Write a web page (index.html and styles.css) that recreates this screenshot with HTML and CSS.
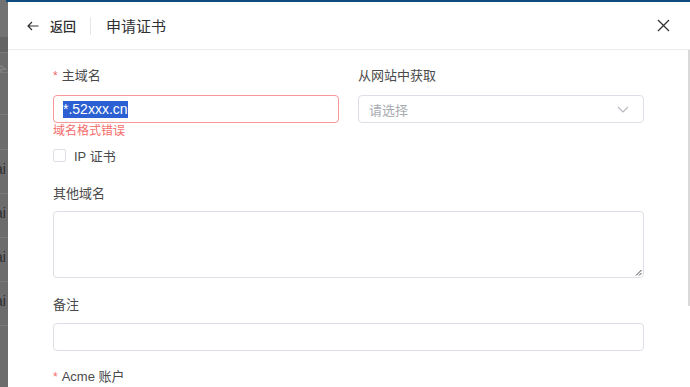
FILE: index.html
```html
<!DOCTYPE html>
<html lang="zh">
<head>
<meta charset="utf-8">
<link rel="stylesheet" href="styles.css">
</head>
<body>
<div class="page">
  <div class="backdrop">
    <div class="bd-row bd-r1"></div>
    <div class="bd-row bd-r2"></div>
    <div class="bd-row bd-r3"><span class="bd-txt">余</span></div>
    <div class="bd-row bd-r4"></div>
    <div class="bd-row bd-r5"></div>
    <div class="bd-row bd-r6"><span class="bd-txt">ai</span></div>
    <div class="bd-row bd-r6"><span class="bd-txt">ai</span></div>
    <div class="bd-row bd-r6"><span class="bd-txt">ai</span></div>
    <div class="bd-row bd-r6"><span class="bd-txt">ai</span></div>
  </div>
  <div class="drawer">
    <div class="header">
      <div class="back">
        <svg class="back-icon" width="12" height="10" viewBox="0 0 12 10"><path d="M11.5 5H1M5 1L1 5l4 4" fill="none" stroke="#333" stroke-width="1.2"/></svg>
        <span class="back-text">返回</span>
      </div>
      <div class="divider"></div>
      <div class="title">申请证书</div>
      <svg class="close" width="13" height="13" viewBox="0 0 13 13"><path d="M1 1l11 11M12 1L1 12" fill="none" stroke="#333" stroke-width="1.3"/></svg>
    </div>
    <div class="content">
      <div class="row2">
        <div class="col">
          <div class="label"><span class="req">*</span>主域名</div>
          <div class="input error"><span class="sel">*.52xxx.cn</span></div>
          <div class="err">域名格式错误</div>
          <label class="check"><span class="box"></span><span class="check-text">IP 证书</span></label>
        </div>
        <div class="col">
          <div class="label">从网站中获取</div>
          <div class="input select"><span class="ph">请选择</span>
            <svg class="chev" width="12" height="7" viewBox="0 0 12 7"><path d="M1 1l5 5 5-5" fill="none" stroke="#b4b7bd" stroke-width="1.1"/></svg>
          </div>
        </div>
      </div>
      <div class="label l-other">其他域名</div>
      <div class="textarea">
        <svg class="grip" width="7" height="7" viewBox="0 0 7 7"><path d="M6.5 1L1 6.5M6.5 4L4 6.5" stroke="#444" stroke-width="1"/></svg>
      </div>
      <div class="label l-note">备注</div>
      <div class="input"></div>
      <div class="label l-acme"><span class="req">*</span>Acme 账户</div>
    </div>
    <div class="scrollbar"></div>
  </div>
</div>
</body>
</html>
```

FILE: styles.css
```css
* { box-sizing: border-box; }
html, body { margin: 0; padding: 0; }
body {
  width: 690px;
  height: 387px;
  overflow: hidden;
  font-family: "Liberation Sans", "Noto Sans CJK SC", sans-serif;
  color: #333;
  background: #6e6e6e;
}
.page {
  display: grid;
  grid-template-columns: 8px 682px;
  height: 387px;
  background: #6e6e6e;
}
.backdrop {
  width: 8px;
  background-color: #6c6c6c;
  overflow: hidden;
  display: flex;
  flex-direction: column;
}
.bd-row {
  border-bottom: 1px solid #7a7a7a;
  overflow: hidden;
  flex: none;
  background-color: #6c6c6c;
}
.bd-r1 { height: 37px; background-color: #727272; border-bottom: none; }
.bd-r2 { height: 16px; background-color: #636363; }
.bd-r3 { height: 20px; }
.bd-r4 { height: 42px; }
.bd-r5 { height: 35px; }
.bd-r6 { height: 44px; }
.bd-r3 .bd-txt { font-size: 12px; color: #8a8a8a; }
.bd-txt {
  display: block;
  margin-left: -5px;
  margin-top: 11px;
  font-size: 14px;
  line-height: 16px;
  color: #2e2e2e;
  white-space: nowrap;
}
.drawer {
  position: relative;
  border-top: 2px solid #0d4a7d;
  background: #fff;
}
.drawer::before {
  content: "";
  position: absolute;
  left: -2px;
  top: -2px;
  width: 2px;
  height: 2px;
  background: #0d4a7d;
}
.header {
  height: 48px;
  border-bottom: 1px solid #ededed;
  display: flex;
  align-items: center;
  padding-left: 19px;
  padding-right: 20px;
}
.back {
  display: flex;
  align-items: center;
}
.back-icon { margin-right: 11px; }
.back-text {
  font-family: "Noto Sans CJK SC", sans-serif;
  font-size: 13px;
  font-weight: 500;
  color: #303133;
}
.divider {
  width: 1px;
  height: 18px;
  background: #e6e6e6;
  margin-left: 14px;
  margin-right: 15px;
}
.title {
  font-family: "Noto Sans CJK SC", sans-serif;
  font-size: 15px;
  color: #303133;
  flex: 1;
}
.content {
  padding: 16px 46px 0 45px;
}
.row2 {
  display: grid;
  grid-template-columns: 286px 286px;
  column-gap: 19px;
}
.label {
  height: 20px;
  line-height: 20px;
  font-size: 13px;
  color: #4a4a4a;
  margin-bottom: 9px;
}
.req {
  color: #f56c6c;
  margin-right: 4px;
  font-size: 12px;
}
.input {
  height: 28px;
  border: 1px solid #dcdfe6;
  border-radius: 4px;
  display: flex;
  align-items: center;
  padding: 0 9px;
  position: relative;
  background: #fff;
}
.input.error { border-color: #f89898; }
.sel {
  font-family: "Liberation Sans", Arial, sans-serif;
  font-size: 14px;
  line-height: 17px;
  background: #2c5fd2;
  color: #fff;
}
.err {
  font-size: 12px;
  line-height: 14px;
  color: #f56c6c;
  margin-top: 1px;
}
.check {
  display: flex;
  align-items: center;
  height: 20px;
  margin-top: 7px;
}
.box {
  width: 13px;
  height: 13px;
  border: 1px solid #dcdfe6;
  border-radius: 2px;
  margin-right: 8px;
}
.check-text {
  font-size: 13px;
  color: #4a4a4a;
}
.select { justify-content: space-between; padding: 0 14px 0 10px; }
.ph {
  font-size: 13px;
  color: #a8abb2;
}
.l-other { margin-top: 19px; margin-bottom: 7px; }
.textarea {
  height: 67px;
  border: 1px solid #dcdfe6;
  border-radius: 4px;
  position: relative;
}
.grip { position: absolute; right: 1px; bottom: 1px; }
.l-note { margin-top: 17px; margin-bottom: 8px; }
.l-acme { margin-top: 16px; }
.scrollbar {
  position: absolute;
  right: 0;
  top: 48px;
  width: 2px;
  height: 256px;
  background: #d9d9d9;
}
```
